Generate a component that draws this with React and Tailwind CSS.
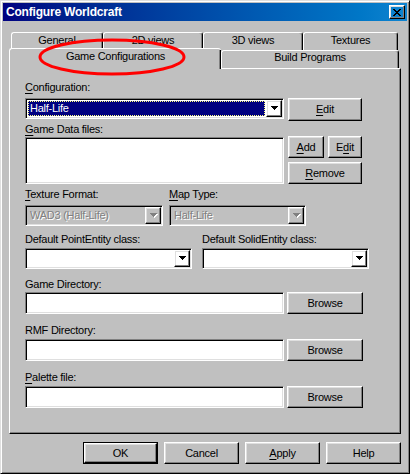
import React from "react";

// Win98 style bevels
const raised =
  "border border-t-white border-l-white border-r-black border-b-black shadow-[inset_-1px_-1px_0_#808080,inset_1px_1px_0_#dfdfdf]";
const sunken =
  "border border-t-[#808080] border-l-[#808080] border-r-white border-b-white shadow-[inset_1px_1px_0_#000,inset_-1px_-1px_0_#dfdfdf]";

function U({ children }) {
  return <span className="underline decoration-1 underline-offset-[2px]">{children}</span>;
}

function Label({ children, className = "" }) {
  return <div className={`h-[13px] leading-[13px] whitespace-nowrap ${className}`}>{children}</div>;
}

function Btn({ children, className = "", isDefault = false }) {
  if (isDefault) {
    return (
      <div className={`border border-black flex ${className}`}>
        <div className={`${raised} flex-1 flex items-center justify-center`}>{children}</div>
      </div>
    );
  }
  return <div className={`${raised} flex items-center justify-center ${className}`}>{children}</div>;
}

function Arrow({ disabled = false }) {
  const fill = disabled ? "#808080" : "#000";
  return (
    <svg width="8" height="5" viewBox="0 0 8 5" shapeRendering="crispEdges">
      {disabled && (
        <g fill="#fff">
          <rect x="1" y="1" width="7" height="1" />
          <rect x="2" y="2" width="5" height="1" />
          <rect x="3" y="3" width="3" height="1" />
          <rect x="4" y="4" width="1" height="1" />
        </g>
      )}
      <g fill={fill}>
        <rect x="0" y="0" width="7" height="1" />
        <rect x="1" y="1" width="5" height="1" />
        <rect x="2" y="2" width="3" height="1" />
        <rect x="3" y="3" width="1" height="1" />
      </g>
    </svg>
  );
}

function Combo({ className = "", value = "", selected = false, disabled = false }) {
  return (
    <div className={`${sunken} h-[21px] p-[1px] flex ${disabled ? "bg-[#c0c0c0]" : "bg-white"} ${className}`}>
      <div className="flex-1 flex p-[1px]">
        {selected ? (
          <div className="flex-1 bg-[#000080] border border-dotted border-[#ffff80] text-white flex items-center pl-[1px] leading-[13px]">
            {value}
          </div>
        ) : (
          <div
            className={`flex-1 flex items-center pl-[2px] leading-[13px] ${
              disabled ? "text-[#808080] [text-shadow:1px_1px_0_#fff]" : ""
            }`}
          >
            {value}
          </div>
        )}
      </div>
      <div className={`${raised} w-[16px] flex items-center justify-center pl-[1px]`}>
        <Arrow disabled={disabled} />
      </div>
    </div>
  );
}

function Field({ label, labelClass, inputClass }) {
  return (
    <>
      <Label className={labelClass}>{label}</Label>
      <div className={`flex gap-[3px] ${inputClass}`}>
        <div className={`${sunken} bg-white w-[259px] h-[22px]`} />
        <Btn className="w-[76px] h-[22px]">Browse</Btn>
      </div>
    </>
  );
}

function Tab({ children, className = "" }) {
  return (
    <div
      className={`border-t border-l border-r border-t-white border-l-white border-r-black rounded-tl-[3px] rounded-tr-[3px] shadow-[inset_-1px_0_0_#808080] bg-[#c0c0c0] flex justify-center leading-[13px] ${className}`}
    >
      {children}
    </div>
  );
}

export default function App() {
  return (
    <div
      className="relative w-[410px] h-[474px] bg-[#c0c0c0] text-black text-[11px] tracking-[-0.25px] border border-t-[#dfdfdf] border-l-[#dfdfdf] border-r-black border-b-black shadow-[inset_1px_1px_0_#fff,inset_-1px_-1px_0_#808080] p-[2px] flex flex-col"
      style={{ fontFamily: '"Liberation Sans", Arial, sans-serif' }}
    >
      {/* title bar */}
      <div className="h-[18px] bg-linear-to-r from-[#000080] to-[#1084d0] flex items-center justify-between pl-[3px] pr-[2px]">
        <span className="text-white font-bold text-[12px] tracking-[-0.2px]">Configure Worldcraft</span>
        <div className={`${raised} w-[16px] h-[14px] flex items-center justify-center`}>
          <svg width="8" height="7" viewBox="0 0 8 7" shapeRendering="crispEdges">
            <path d="M0 0h2v1h-2zM6 0h2v1h-2zM1 1h2v1h-2zM5 1h2v1h-2zM2 2h4v1h-4zM3 3h2v1h-2zM2 4h4v1h-4zM1 5h2v1h-2zM5 5h2v1h-2zM0 6h2v1h-2zM6 6h2v1h-2z" fill="#000" />
          </svg>
        </div>
      </div>

      {/* tabs */}
      <div className="mt-[11px] ml-[6px] w-[392px] flex flex-col">
        <div className="h-[18px] flex pl-[2px]">
          <Tab className="w-[92px] pt-[1px]">General</Tab>
          <Tab className="w-[100px] pt-[1px]">2D views</Tab>
          <Tab className="w-[100px] pt-[1px]">3D views</Tab>
          <Tab className="w-[95px] pt-[1px]">Textures</Tab>
        </div>
        <div className="h-[18px] flex items-end">
          <Tab className="relative z-10 w-[212px] h-[21px] -mb-[1px] pt-[1px] shadow-none border-r-0">
            <span>Game Configurations</span>
            <span className="absolute right-0 top-[1px] bottom-0 w-[2px] border-r border-r-black bg-[#808080] border-l border-l-[#808080]" />
          </Tab>
          <Tab className="w-[178px] h-[18px]">Build Programs</Tab>
        </div>

        {/* panel */}
        <div className="h-[366px] border border-t-white border-l-white border-r-black border-b-black shadow-[inset_-1px_-1px_0_#808080] flex flex-col pl-[15px] pt-[12px]">
          <Label>
            <U>C</U>onfiguration:
          </Label>
          <div className="flex mt-[4px] h-[23px] items-start gap-[4px]">
            <Combo className="w-[259px]" value="Half-Life" selected />
            <Btn className="w-[74px] h-[23px]">
              <U>E</U>dit
            </Btn>
          </div>

          <Label className="mt-[2px]">
            <U>G</U>ame Data files:
          </Label>
          <div className="flex gap-[4px] h-[48px]">
            <div className={`${sunken} bg-white w-[259px] h-[47px] mt-[1px]`} />
            <div className="flex flex-col gap-[4px]">
              <div className="flex gap-[4px]">
                <Btn className="w-[36px] h-[22px]">
                  <U>A</U>dd
                </Btn>
                <Btn className="w-[34px] h-[22px]">
                  E<U>d</U>it
                </Btn>
              </div>
              <Btn className="w-[74px] h-[22px]">
                <U>R</U>emove
              </Btn>
            </div>
          </div>

          <div className="flex gap-[6px] mt-[4px]">
            <Label className="w-[138px]">
              <U>T</U>exture Format:
            </Label>
            <Label>
              <U>M</U>ap Type:
            </Label>
          </div>
          <div className="flex gap-[6px] mt-[4px]">
            <Combo className="w-[138px]" value="WAD3 (Half-Life)" disabled />
            <Combo className="w-[137px]" value="Half-Life" disabled />
          </div>

          <div className="flex gap-[10px] mt-[7px]">
            <Label className="w-[167px]">Default PointEntity class:</Label>
            <Label>Default SolidEntity class:</Label>
          </div>
          <div className="flex gap-[10px] mt-[2px]">
            <Combo className="w-[167px]" />
            <Combo className="w-[167px]" />
          </div>

          <Field label="Game Directory:" labelClass="mt-[9px]" inputClass="mt-[1px]" />
          <Field label="RMF Directory:" labelClass="mt-[10px]" inputClass="mt-[2px]" />
          <Field
            label={
              <>
                <U>P</U>alette file:
              </>
            }
            labelClass="mt-[10px]"
            inputClass="mt-[2px]"
          />
        </div>
      </div>

      {/* bottom buttons */}
      <div className="mt-[8px] pr-[6px] flex justify-end gap-[6px]">
        <Btn isDefault className="w-[75px] h-[22px]">OK</Btn>
        <Btn className="w-[75px] h-[22px]">Cancel</Btn>
        <Btn className="w-[75px] h-[22px]">
          <U>A</U>pply
        </Btn>
        <Btn className="w-[75px] h-[22px]">Help</Btn>
      </div>

      {/* red annotation ellipse */}
      <svg className="absolute z-20 left-[36px] top-[36px] pointer-events-none" width="152" height="40" viewBox="0 0 152 40">
        <ellipse cx="75" cy="20" rx="72" ry="17" fill="none" stroke="#ff0000" strokeWidth="3" />
      </svg>
    </div>
  );
}
